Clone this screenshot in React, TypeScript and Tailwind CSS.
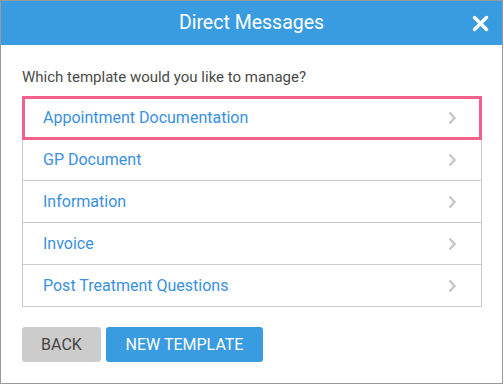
const templates = [
  "Appointment Documentation",
  "GP Document",
  "Information",
  "Invoice",
  "Post Treatment Questions",
];

function Chevron() {
  return (
    <svg width="10" height="14" viewBox="0 0 10 14" className="shrink-0">
      <path d="M2.5 1.5 L7.5 7 L2.5 12.5" fill="none" stroke="#c9c9c9" strokeWidth="2.6" />
    </svg>
  );
}

export default function App() {
  return (
    <div className="h-[384px] w-[504px] bg-white font-['Roboto',sans-serif]">
      <div className="flex h-[384px] w-[503px] flex-col border border-[#9a9a9a] bg-white">
        <div className="relative flex h-[44px] items-center justify-center bg-[#399ce0]">
          <span className="text-[19.5px] text-white">Direct Messages</span>
          <button type="button" className="absolute right-[13px] top-[14px]" aria-label="Close">
            <svg width="17" height="17" viewBox="0 0 17 17">
              <path d="M2.5 2.5 L14.5 14.5 M14.5 2.5 L2.5 14.5" stroke="white" strokeWidth="3.4" strokeLinecap="round" />
            </svg>
          </button>
        </div>

        <div className="px-[21px] pt-[21px]">
          <p className="text-[15px] leading-[22px] text-[#4a4a4a]">Which template would you like to manage?</p>

          <div className="mt-[8px] w-[460px] border-x border-b border-[#cccccc]">
            {templates.map((t, i) => (
              <div
                key={t}
                className="relative box-border flex h-[42px] items-center justify-between border-t border-[#cccccc] pl-[20px] pr-[24px]"
              >
                <span className="text-[16px] text-[#3a90df]">{t}</span>
                <Chevron />
                {i === 0 && (
                  <div className="absolute -left-px -right-px -top-px bottom-[-2px] z-10 border-[3px] border-[#f1618b]" />
                )}
              </div>
            ))}
          </div>

          <div className="mt-[20px] flex gap-[5px]">
            <button type="button" className="h-[35px] w-[79px] rounded-[3px] bg-[#cccccc] text-[16px] text-[#444444]">
              BACK
            </button>
            <button type="button" className="h-[35px] w-[157px] rounded-[3px] bg-[#399ce0] text-[16px] text-white">
              NEW TEMPLATE
            </button>
          </div>
        </div>
      </div>
    </div>
  );
}
